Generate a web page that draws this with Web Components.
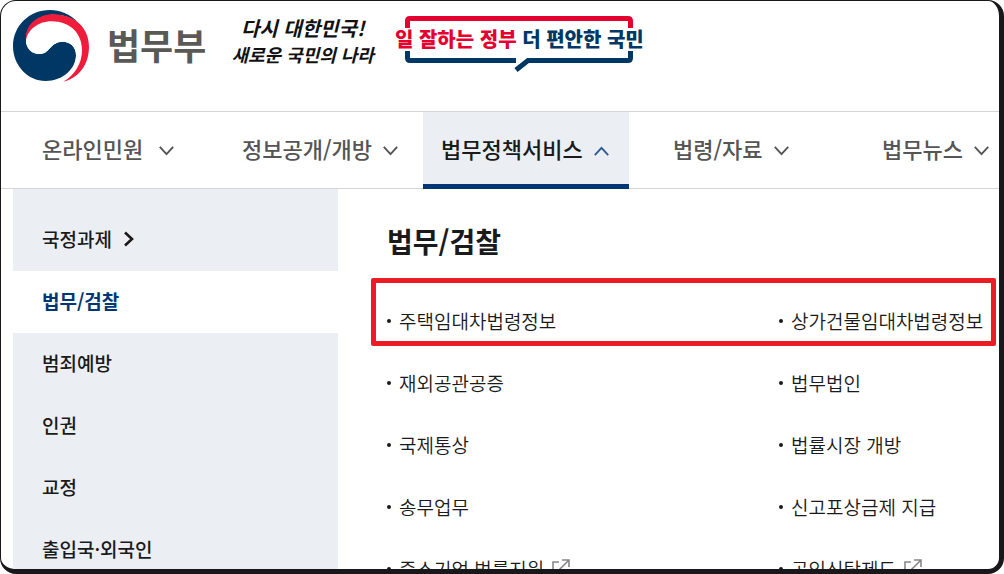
<!DOCTYPE html>
<html lang="ko">
<head>
<meta charset="utf-8">
<meta name="viewport" content="width=device-width, initial-scale=1">
<title>법무부</title>
<style>
  body { margin: 0; background: #fff; color: #1a1a1a; font-family: "Noto Sans CJK KR", "Noto Sans", sans-serif; }
</style>
</head>
<body>
<moj-page></moj-page>
<script>
const define = (name, html, setup) => {
  const template = document.createElement('template');
  template.innerHTML = html;
  customElements.define(name, class extends HTMLElement {
    constructor() {
      super();
      this.attachShadow({ mode: 'open' }).append(template.content.cloneNode(true));
    }
    connectedCallback() { if (setup) setup(this, this.shadowRoot); }
  });
};

/* Icons */
define('moj-chevron', `
  <style>
    :host { display: block; flex: none; color: #555; }
    :host([direction="up"]) svg { transform: rotate(180deg); }
    svg { display: block; }
  </style>
  <svg width="15" height="10" viewBox="0 0 15 10" fill="none" stroke="currentColor" stroke-width="1.9" aria-hidden="true"><path d="M.8 .9 7.5 8.1 14.2 .9"/></svg>`);

define('moj-external', `
  <style>:host { display: block; flex: none; color: #888; } svg { display: block; }</style>
  <svg width="18" height="18" viewBox="0 0 18 18" fill="none" stroke="currentColor" stroke-width="1.6" aria-hidden="true"><path d="M7 3H1v14h14v-6M10 1h7v7M17 1 7 11"/></svg>`);

/* Header */
define('moj-logo', `
  <style>
    :host { display: block; flex: none; }
    a { display: flex; align-items: flex-start; gap: 17px; color: #595957; text-decoration: none; font-size: 36px; line-height: 70px; font-weight: 700; white-space: nowrap; }
    svg { display: block; }
  </style>
  <a href="#home">
    <svg width="78" height="74" viewBox="36 27 234 222" aria-hidden="true">
      <path fill="#003764" d="M236 70C212 42 180 30 150 30C88 30 39 78 39 138C39 198 85 243 136 243C190 243 228 205 228 165C228 140 210 125 188 125C150 125 150 162 118 162C95 162 78 145 78 120C78 75 115 44 160 44C192 44 218 54 236 70Z"/>
      <path fill="#fff" d="M78 122C82 92 112 64 155 64C210 64 246 100 246 150C246 190 225 225 190 245L205 225C222 205 228 185 228 165C228 140 210 125 188 125C150 125 150 162 118 162C95 162 78 145 78 122Z"/>
      <path fill="#ef1c3c" d="M78 122C74 75 112 43 160 43C225 43 267 85 267 140C267 195 235 234 190 245C225 225 246 190 246 150C246 100 210 64 155 64C112 64 82 92 78 122Z"/>
    </svg>
    <span>법무부</span>
  </a>`);

define('moj-motto', `
  <style>
    :host { display: block; flex: none; color: #111; font-style: italic; font-weight: 700; text-align: center; white-space: nowrap; }
    p { margin: 0; font-size: 20px; line-height: 26px; }
    p + p { font-size: 18px; }
  </style>
  <p>다시 대한민국!</p><p>새로운 국민의 나라</p>`);

define('moj-slogan', `
  <style>
    :host { display: grid; flex: none; justify-items: center; color: #003764; }
    svg, p { grid-area: 1 / 1; }
    svg { display: block; }
    p { margin: 0; padding-top: 8px; font-size: 20px; line-height: 32px; font-weight: 900; white-space: nowrap; }
    span { color: #e4002f; }
  </style>
  <svg width="230" height="60" viewBox="0 0 230 60" fill="none" stroke-width="5" aria-hidden="true">
    <path stroke="#e4002f" d="M3.500 13V6Q3.500 3.500 6 3.500H224Q226.500 3.500 226.500 6V13"/>
    <path stroke="#003764" d="M3.500 36V43Q3.500 45.500 6 45.500H112M226.500 36V43Q226.500 45.500 224 45.500H124L112 55"/>
  </svg>
  <p><span>일 잘하는 정부</span> 더 편안한 국민</p>`);

define('moj-header', `
  <style>
    :host { display: flex; align-items: flex-start; height: 110px; padding-left: 11px; box-sizing: border-box; }
    moj-logo { margin-top: 8px; }
    moj-motto { margin: 14px 21px 0 25px; }
    moj-slogan { margin-top: 14px; }
  </style>
  <moj-logo></moj-logo><moj-motto></moj-motto><moj-slogan></moj-slogan>`);

/* Main navigation */
define('moj-nav-item', `
  <style>
    :host { display: flex; color: #555; }
    a { display: flex; align-items: center; gap: 11px; padding: 0 20px 0 18px; border-bottom: 5px solid transparent; margin-bottom: -1px; color: inherit; text-decoration: none; font-size: 22px; line-height: 32px; font-weight: 500; white-space: nowrap; }
    :host([wide]) a { gap: 16px; }
    moj-chevron { margin-top: 6px; }
    :host([current]) { color: #1a1a1a; }
    :host([current]) a { background: #ebeff4; border-color: #003675; }
    :host([current]) moj-chevron { color: #2c5a93; }
  </style>
  <a href="#menu"><slot></slot><moj-chevron></moj-chevron></a>`,
  (el, root) => {
    if (el.hasAttribute('current')) {
      root.querySelector('moj-chevron').setAttribute('direction', 'up');
      root.querySelector('a').setAttribute('aria-current', 'true');
    }
  });

define('moj-nav', `
  <style>
    :host { display: block; border: solid #d5d5d5; border-width: 1px 0; }
    nav { display: grid; grid-template-columns: minmax(0, 200fr) minmax(0, 199fr) minmax(0, 232fr) minmax(0, 209fr) minmax(0, 135fr); height: 76px; padding-left: 23px; }
  </style>
  <nav aria-label="주 메뉴">
    <moj-nav-item wide>온라인민원</moj-nav-item>
    <moj-nav-item>정보공개/개방</moj-nav-item>
    <moj-nav-item current>법무정책서비스</moj-nav-item>
    <moj-nav-item>법령/자료</moj-nav-item>
    <moj-nav-item>법무뉴스</moj-nav-item>
  </nav>`);

/* Side menu */
define('moj-side-item', `
  <style>
    :host { display: block; background: #ebeff4; }
    a { display: flex; align-items: center; gap: 12px; height: 62px; padding: 0 0 4px 29px; box-sizing: border-box; color: #1a1a1a; text-decoration: none; font-size: 19px; font-weight: 500; white-space: nowrap; }
    svg { display: none; margin-top: 2px; }
    :host([arrow]) svg { display: block; }
    :host([current]) { background: #fff; }
    :host([current]) a { color: #003675; font-weight: 700; }
  </style>
  <a href="#section"><slot></slot><svg width="10" height="16" viewBox="0 0 10 16" fill="none" stroke="currentColor" stroke-width="2.6" aria-hidden="true"><path d="M1 1.500 8 8 1 14.500"/></svg></a>`);

define('moj-side-menu', `
  <style>
    :host { display: block; }
    moj-side-item:first-child { padding-top: 20px; }
  </style>
  <nav aria-label="하위 메뉴">
    <moj-side-item arrow>국정과제</moj-side-item>
    <moj-side-item current>법무/검찰</moj-side-item>
    <moj-side-item>범죄예방</moj-side-item>
    <moj-side-item>인권</moj-side-item>
    <moj-side-item>교정</moj-side-item>
    <moj-side-item>출입국·외국인</moj-side-item>
  </nav>`);

/* Service links */
define('moj-link', `
  <style>
    :host { display: block; }
    a { display: flex; align-items: center; height: 62px; padding-bottom: 2px; box-sizing: border-box; color: #1a1a1a; text-decoration: none; font-size: 19px; font-weight: 350; white-space: nowrap; }
    a::before { content: ""; flex: none; width: 4px; height: 4px; margin: 2px 8px 0 0; border-radius: 2px; background: #1a1a1a; }
    moj-external { display: none; margin-left: 8px; }
    :host([external]) moj-external { display: block; }
  </style>
  <a href="#service"><slot></slot><moj-external></moj-external></a>`);

define('moj-panel', `
  <style>
    :host { display: block; position: relative; padding: 31px 0 0 49px; }
    h2 { margin: 0 0 28px; font-size: 28px; line-height: 42px; font-weight: 700; }
    .links { display: grid; grid-template-columns: 392fr 220fr; }
    .mark { position: absolute; top: 89px; left: 33px; right: 3px; height: 68px; box-sizing: border-box; border: 5px solid #ed1c24; border-radius: 2px; pointer-events: none; }
  </style>
  <h2>법무/검찰</h2>
  <div class="links">
    <moj-link>주택임대차법령정보</moj-link><moj-link>상가건물임대차법령정보</moj-link>
    <moj-link>재외공관공증</moj-link><moj-link>법무법인</moj-link>
    <moj-link>국제통상</moj-link><moj-link>법률시장 개방</moj-link>
    <moj-link>송무업무</moj-link><moj-link>신고포상금제 지급</moj-link>
    <moj-link external>중소기업 법률지원</moj-link><moj-link external>공익신탁제도</moj-link>
  </div>
  <div class="mark"></div>`);

define('moj-page', `
  <style>
    :host { display: block; height: 100vh; box-sizing: border-box; overflow: hidden; border: solid #18181a; border-width: 1px 5px 5px 1px; border-radius: 16px; background: #fff; }
    main { display: grid; grid-template-columns: 325px 1fr; padding-left: 12px; }
  </style>
  <moj-header></moj-header>
  <moj-nav></moj-nav>
  <main><moj-side-menu></moj-side-menu><moj-panel></moj-panel></main>`);
</script>
</body>
</html>
